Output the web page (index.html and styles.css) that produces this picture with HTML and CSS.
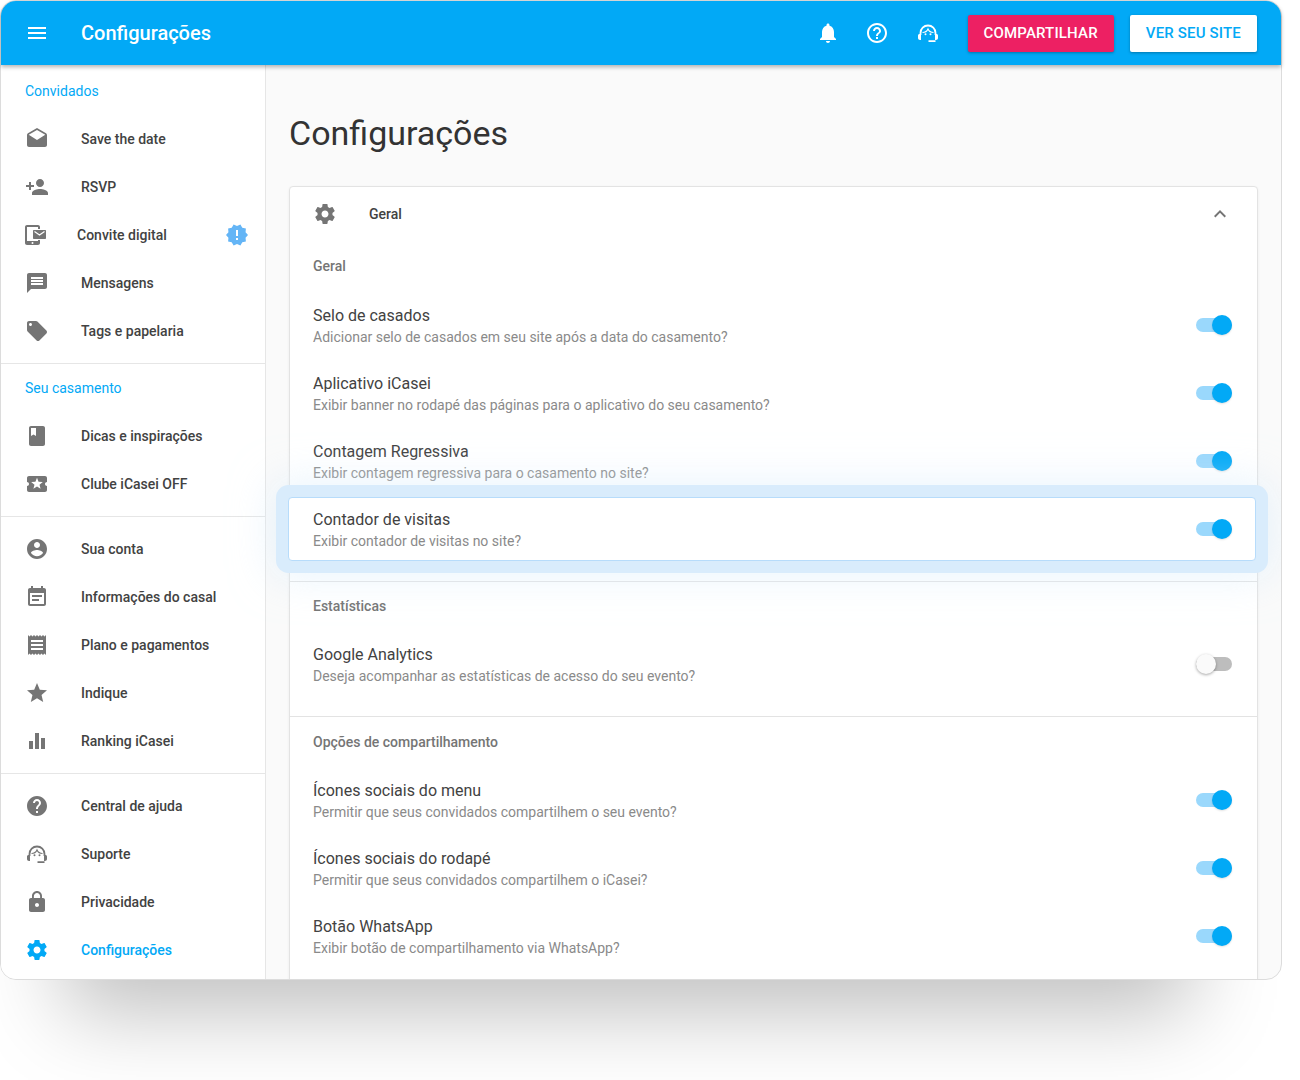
FILE: index.html
```html
<!DOCTYPE html>
<html lang="pt-BR">
<head>
<meta charset="utf-8">
<title>Configurações</title>
<link rel="stylesheet" href="styles.css">
</head>
<body>
<svg class="sprite" aria-hidden="true">
  <symbol id="i-menu" viewBox="0 0 24 24"><path d="M3 18h18v-2H3v2zm0-5h18v-2H3v2zm0-7v2h18V6H3z"/></symbol>
  <symbol id="i-drafts" viewBox="0 0 24 24"><path d="M21.99 8c0-.72-.37-1.35-.94-1.7L12 1 2.95 6.3C2.38 6.65 2 7.28 2 8v10c0 1.1.9 2 2 2h16c1.1 0 2-.9 2-2l-.01-10zM12 13L3.74 7.84 12 3l8.26 4.84L12 13z"/></symbol>
  <symbol id="i-person-add" viewBox="0 0 24 24"><path d="M15 12c2.21 0 4-1.79 4-4s-1.79-4-4-4-4 1.79-4 4 1.79 4 4 4zm-9-2V7H4v3H1v2h3v3h2v-3h3v-2H6zm9 4c-2.67 0-8 1.34-8 4v2h16v-2c0-2.66-5.33-4-8-4z"/></symbol>
  <symbol id="i-device" viewBox="0 0 24 24"><path fill-rule="evenodd" d="M2 2h11c1.100 0 2 .9 2 2v2h-2V4H2v14h11v-1h2v3c0 1.100-.9 2-2 2H2c-1.100 0-2-.9-2-2V4c0-1.100.9-2 2-2zm5.500 17a1 1 0 1 0 0 2 1 1 0 0 0 0-2z"/><path d="M9 7h11c.6 0 1 .4 1 1v7c0 .6-.4 1-1 1H9c-.6 0-1-.4-1-1V8c0-.6.4-1 1-1z"/><path d="M9.500 8.500l5 3.500 5-3.500" fill="none" stroke="#fff" stroke-width="1.200"/></symbol>
  <symbol id="i-release" viewBox="0 0 24 24"><path d="M23 12l-2.44-2.78.34-3.68-3.61-.82-1.89-3.18L12 3 8.6 1.54 6.71 4.72l-3.61.81.34 3.68L1 12l2.44 2.78-.34 3.69 3.61.82 1.89 3.18L12 21l3.4 1.46 1.89-3.18 3.61-.82-.34-3.68L23 12zm-10 5h-2v-2h2v2zm0-4h-2V7h2v6z"/></symbol>
  <symbol id="i-message" viewBox="0 0 24 24"><path d="M20 2H4c-1.1 0-1.99.9-1.99 2L2 22l4-4h14c1.1 0 2-.9 2-2V4c0-1.1-.9-2-2-2zm-2 12H6v-2h12v2zm0-3H6V9h12v2zm0-3H6V6h12v2z"/></symbol>
  <symbol id="i-tag" viewBox="0 0 24 24"><path d="M21.41 11.58l-9-9C12.05 2.22 11.55 2 11 2H4c-1.1 0-2 .9-2 2v7c0 .55.22 1.05.59 1.42l9 9c.36.36.86.58 1.41.58.55 0 1.05-.22 1.41-.59l7-7c.37-.36.59-.86.59-1.41 0-.55-.23-1.06-.59-1.42zM5.500 7C4.670 7 4 6.330 4 5.500S4.670 4 5.500 4 7 4.670 7 5.500 6.330 7 5.500 7z"/></symbol>
  <symbol id="i-book" viewBox="0 0 24 24"><path d="M18 2H6c-1.100 0-2 .9-2 2v16c0 1.100.9 2 2 2h12c1.100 0 2-.9 2-2V4c0-1.100-.9-2-2-2zM6 4h5v8l-2.500-1.500L6 12V4z"/></symbol>
  <symbol id="i-ticket" viewBox="0 0 24 24"><path d="M20 12c0-1.100.9-2 2-2V6c0-1.100-.9-2-2-2H4c-1.100 0-1.990.9-1.990 2v4c1.100 0 1.990.9 1.990 2s-.89 2-2 2v4c0 1.100.9 2 2 2h16c1.100 0 2-.9 2-2v-4c-1.100 0-2-.9-2-2zm-4.420 4.800L12 14.500l-3.580 2.300 1.080-4.120-3.290-2.690 4.240-.25L12 5.800l1.540 3.950 4.240.25-3.290 2.690 1.090 4.110z"/></symbol>
  <symbol id="i-account" viewBox="0 0 24 24"><path d="M12 2C6.480 2 2 6.480 2 12s4.480 10 10 10 10-4.480 10-10S17.520 2 12 2zm0 3c1.660 0 3 1.340 3 3s-1.340 3-3 3-3-1.340-3-3 1.340-3 3-3zm0 14.200c-2.500 0-4.710-1.280-6-3.220.03-1.990 4-3.080 6-3.080 1.990 0 5.970 1.090 6 3.080-1.290 1.940-3.500 3.220-6 3.220z"/></symbol>
  <symbol id="i-event" viewBox="0 0 24 24"><path d="M17 10H7v2h10v-2zm2-7h-1V1h-2v2H8V1H6v2H5c-1.110 0-1.990.9-1.990 2L3 19c0 1.100.89 2 2 2h14c1.100 0 2-.9 2-2V5c0-1.100-.9-2-2-2zm0 16H5V8h14v11zm-5-5H7v2h7v-2z"/></symbol>
  <symbol id="i-receipt" viewBox="0 0 24 24"><path d="M18 17H6v-2h12v2zm0-4H6v-2h12v2zm0-4H6V7h12v2zM3 22l1.500-1.500L6 22l1.500-1.500L9 22l1.500-1.500L12 22l1.500-1.500L15 22l1.500-1.500L18 22l1.500-1.500L21 22V2l-1.500 1.500L18 2l-1.500 1.500L15 2l-1.500 1.500L12 2l-1.500 1.500L9 2 7.500 3.500 6 2 4.500 3.500 3 2v20z"/></symbol>
  <symbol id="i-star" viewBox="0 0 24 24"><path d="M12 17.270L18.180 21l-1.640-7.030L22 9.240l-7.190-.61L12 2 9.190 8.630 2 9.240l5.460 4.730L5.820 21z"/></symbol>
  <symbol id="i-bars" viewBox="0 0 24 24"><path d="M10 20h4V4h-4v16zm-6 0h4v-8H4v8zM16 9v11h4V9h-4z"/></symbol>
  <symbol id="i-help" viewBox="0 0 24 24"><path d="M12 2C6.480 2 2 6.480 2 12s4.480 10 10 10 10-4.480 10-10S17.520 2 12 2zm1 17h-2v-2h2v2zm2.070-7.750l-.9.92C13.450 12.900 13 13.500 13 15h-2v-.5c0-1.100.45-2.100 1.170-2.830l1.240-1.260c.37-.36.59-.86.59-1.410 0-1.100-.9-2-2-2s-2 .9-2 2H8c0-2.210 1.790-4 4-4s4 1.790 4 4c0 .88-.36 1.680-.93 2.250z"/></symbol>
  <symbol id="i-help-outline" viewBox="0 0 24 24"><path d="M11 18h2v-2h-2v2zm1-16C6.480 2 2 6.480 2 12s4.480 10 10 10 10-4.480 10-10S17.520 2 12 2zm0 18c-4.410 0-8-3.590-8-8s3.590-8 8-8 8 3.590 8 8-3.590 8-8 8zm0-14c-2.210 0-4 1.790-4 4h2c0-1.100.9-2 2-2s2 .9 2 2c0 2-3 1.750-3 5h2c0-2.250 3-2.500 3-5 0-2.210-1.790-4-4-4z"/></symbol>
  <symbol id="i-support" viewBox="0 0 24 24"><path d="M4.500 14V12a7.500 7.500 0 0 1 15 0V14" fill="none" stroke="currentColor" stroke-width="1.800"/><path d="M6.500 11.500c2.800 0 4.500-1.300 5.500-3.500 1 2.200 2.700 3.500 5.500 3.500" fill="none" stroke="currentColor" stroke-width="1.200"/><path d="M2 14.500c0-.9.7-1.500 1.500-1.500H5v6H4c-1.100 0-2-.9-2-2zM19 13h1.500c.8 0 1.500.6 1.500 1.500V17c0 1.100-.9 2-2 2h-1zM12.500 19.300H19.500v1.600H12.500z"/><circle cx="9.500" cy="13.300" r="1"/><circle cx="14.500" cy="13.300" r="1"/></symbol>
  <symbol id="i-lock" viewBox="0 0 24 24"><path d="M18 8h-1V6c0-2.760-2.240-5-5-5S7 3.240 7 6v2H6c-1.100 0-2 .9-2 2v10c0 1.100.9 2 2 2h12c1.100 0 2-.9 2-2V10c0-1.100-.9-2-2-2zm-6 9c-1.100 0-2-.9-2-2s.9-2 2-2 2 .9 2 2-.9 2-2 2zm3.100-9H8.900V6c0-1.710 1.390-3.100 3.100-3.100 1.710 0 3.100 1.390 3.100 3.100v2z"/></symbol>
  <symbol id="i-settings" viewBox="0 0 24 24"><path d="M19.430 12.980c.04-.32.07-.64.07-.98s-.03-.66-.07-.98l2.110-1.650c.19-.15.24-.42.12-.64l-2-3.460c-.12-.22-.39-.3-.61-.22l-2.490 1c-.52-.4-1.080-.73-1.690-.98l-.38-2.650C14.460 2.180 14.250 2 14 2h-4c-.25 0-.46.18-.49.42l-.38 2.650c-.61.25-1.170.59-1.690.98l-2.490-1c-.23-.09-.49 0-.61.22l-2 3.460c-.13.22-.07.49.12.64l2.110 1.650c-.04.32-.07.65-.07.98s.03.66.07.98l-2.110 1.650c-.19.15-.24.42-.12.64l2 3.460c.12.22.39.3.61.22l2.490-1c.52.4 1.080.73 1.690.98l.38 2.650c.03.24.24.42.49.42h4c.25 0 .46-.18.49-.42l.38-2.650c.61-.25 1.170-.59 1.690-.98l2.490 1c.23.09.49 0 .61-.22l2-3.460c.12-.22.07-.49-.12-.64l-2.110-1.650zM12 15.500c-1.930 0-3.500-1.570-3.500-3.500s1.570-3.500 3.500-3.500 3.500 1.570 3.500 3.500-1.570 3.500-3.500 3.500z"/></symbol>
  <symbol id="i-bell" viewBox="0 0 24 24"><path d="M12 22c1.100 0 2-.9 2-2h-4c0 1.100.89 2 2 2zm6-6v-5c0-3.070-1.640-5.640-4.500-6.320V4c0-.83-.67-1.500-1.500-1.500s-1.500.67-1.500 1.500v.68C7.630 5.360 6 7.920 6 11v5l-2 2v1h16v-1l-2-2z"/></symbol>
  <symbol id="i-less" viewBox="0 0 24 24"><path d="M12 8l-6 6 1.410 1.410L12 10.830l4.590 4.580L18 14z"/></symbol>
</svg>

<div class="window">
  <header class="topbar">
    <svg class="icon menu-btn"><use href="#i-menu"/></svg>
    <div class="topbar-title">Configurações</div>
    <svg class="icon top-bell"><use href="#i-bell"/></svg>
    <svg class="icon top-help"><use href="#i-help-outline"/></svg>
    <svg class="icon top-support"><use href="#i-support"/></svg>
    <a class="btn btn-pink">COMPARTILHAR</a>
    <a class="btn btn-white">VER SEU SITE</a>
  </header>

  <div class="body">
    <nav class="sidebar">
      <section class="nav-group first">
        <div class="nav-label">Convidados</div>
        <a class="nav-item"><svg class="icon"><use href="#i-drafts"/></svg><span>Save the date</span></a>
        <a class="nav-item"><svg class="icon"><use href="#i-person-add"/></svg><span>RSVP</span></a>
        <a class="nav-item nav-item-inset"><svg class="icon"><use href="#i-device"/></svg><span>Convite digital</span><svg class="icon nav-badge"><use href="#i-release"/></svg></a>
        <a class="nav-item"><svg class="icon"><use href="#i-message"/></svg><span>Mensagens</span></a>
        <a class="nav-item"><svg class="icon"><use href="#i-tag"/></svg><span>Tags e papelaria</span></a>
      </section>
      <section class="nav-group labelled">
        <div class="nav-label">Seu casamento</div>
        <a class="nav-item"><svg class="icon"><use href="#i-book"/></svg><span>Dicas e inspirações</span></a>
        <a class="nav-item"><svg class="icon"><use href="#i-ticket"/></svg><span>Clube iCasei OFF</span></a>
      </section>
      <section class="nav-group">
        <a class="nav-item"><svg class="icon"><use href="#i-account"/></svg><span>Sua conta</span></a>
        <a class="nav-item"><svg class="icon"><use href="#i-event"/></svg><span>Informações do casal</span></a>
        <a class="nav-item"><svg class="icon"><use href="#i-receipt"/></svg><span>Plano e pagamentos</span></a>
        <a class="nav-item"><svg class="icon"><use href="#i-star"/></svg><span>Indique</span></a>
        <a class="nav-item"><svg class="icon"><use href="#i-bars"/></svg><span>Ranking iCasei</span></a>
      </section>
      <section class="nav-group">
        <a class="nav-item"><svg class="icon"><use href="#i-help"/></svg><span>Central de ajuda</span></a>
        <a class="nav-item"><svg class="icon"><use href="#i-support"/></svg><span>Suporte</span></a>
        <a class="nav-item"><svg class="icon"><use href="#i-lock"/></svg><span>Privacidade</span></a>
        <a class="nav-item active"><svg class="icon"><use href="#i-settings"/></svg><span>Configurações</span></a>
      </section>
    </nav>

    <main class="content">
      <h1 class="page-title">Configurações</h1>
      <div class="card">
        <div class="card-head">
          <svg class="icon"><use href="#i-settings"/></svg>
          <span class="card-head-title">Geral</span>
          <svg class="icon card-head-toggle"><use href="#i-less"/></svg>
        </div>

        <section class="group group-first">
          <div class="group-label">Geral</div>
          <div class="row"><div class="row-text"><div class="row-title">Selo de casados</div><div class="row-sub">Adicionar selo de casados em seu site após a data do casamento?</div></div><div class="switch on"></div></div>
          <div class="row"><div class="row-text"><div class="row-title">Aplicativo iCasei</div><div class="row-sub">Exibir banner no rodapé das páginas para o aplicativo do seu casamento?</div></div><div class="switch on"></div></div>
          <div class="row"><div class="row-text"><div class="row-title">Contagem Regressiva</div><div class="row-sub">Exibir contagem regressiva para o casamento no site?</div></div><div class="switch on"></div></div>
          <div class="row row-focus"><div class="row-text"><div class="row-title">Contador de visitas</div><div class="row-sub">Exibir contador de visitas no site?</div></div><div class="switch on"></div></div>
        </section>

        <section class="group">
          <div class="group-label">Estatísticas</div>
          <div class="row"><div class="row-text"><div class="row-title">Google Analytics</div><div class="row-sub">Deseja acompanhar as estatísticas de acesso do seu evento?</div></div><div class="switch"></div></div>
        </section>

        <section class="group group-share">
          <div class="group-label">Opções de compartilhamento</div>
          <div class="row"><div class="row-text"><div class="row-title">Ícones sociais do menu</div><div class="row-sub">Permitir que seus convidados compartilhem o seu evento?</div></div><div class="switch on"></div></div>
          <div class="row"><div class="row-text"><div class="row-title">Ícones sociais do rodapé</div><div class="row-sub">Permitir que seus convidados compartilhem o iCasei?</div></div><div class="switch on"></div></div>
          <div class="row"><div class="row-text"><div class="row-title">Botão WhatsApp</div><div class="row-sub">Exibir botão de compartilhamento via WhatsApp?</div></div><div class="switch on"></div></div>
        </section>
      </div>
    </main>
  </div>
</div>
</body>
</html>
```

FILE: styles.css
```css
* { box-sizing: border-box; }

html, body {
  margin: 0;
  height: 1080px;
  overflow: hidden;
  background: #fff;
}

body {
  font-family: Roboto, "Liberation Sans", sans-serif;
  color: #424242;
}

.sprite { display: none; }

.icon {
  width: 24px;
  height: 24px;
  flex: none;
  fill: currentColor;
  color: #757575;
}

.window {
  width: 1282px;
  height: 980px;
  border: 1px solid #dcdcdc;
  border-radius: 16px;
  display: flex;
  flex-direction: column;
  background: #fafafa;
  box-shadow: -14px 110px 80px -78px rgba(0, 0, 0, .25);
  position: relative;
}

.topbar {
  height: 64px;
  flex: none;
  display: flex;
  align-items: center;
  background: #02a9f6;
  border-radius: 15px 15px 0 0;
  box-shadow: 0 2px 4px rgba(0, 0, 0, .3);
  color: #fff;
  padding: 0 24px;
  position: relative;
  z-index: 3;
}

.topbar .icon { color: #fff; }

.topbar-title {
  margin-left: 32px;
  font-size: 20px;
  font-weight: 500;
  margin-right: auto;
}

.top-help { margin-left: 25px; }
.top-support { margin-left: 27px; }

.btn {
  height: 37px;
  display: flex;
  align-items: center;
  padding: 0 16px;
  border-radius: 2px;
  font-size: 15px;
  font-weight: 500;
  letter-spacing: .17px;
  box-shadow: 0 1px 3px rgba(0, 0, 0, .3);
}

.btn-pink { background: #ed2063; color: #fff; margin-left: 28px; }
.btn-white { background: #fff; color: #02a9f6; margin-left: 16px; }

.body {
  flex: 1;
  min-height: 0;
  display: flex;
  overflow: hidden;
  border-radius: 0 0 15px 15px;
}

.sidebar {
  width: 265px;
  flex: none;
  background: #fff;
  border-right: 1px solid #e6e6e6;
}

.nav-group {
  padding: 8px 0;
  border-bottom: 1px solid #e6e6e6;
}

.nav-group:last-child { border-bottom: 0; }
.nav-group.first { padding-top: 2px; }
.nav-group.labelled { padding-top: 0; }

.nav-label {
  height: 48px;
  display: flex;
  align-items: center;
  padding-left: 24px;
  font-size: 14px;
  font-weight: 400;
  color: #02a9f6;
}

.nav-item {
  height: 48px;
  display: flex;
  align-items: center;
  padding-left: 24px;
  font-size: 14px;
  font-weight: 500;
  color: #424242;
}

.nav-item > span { margin-left: 32px; }
.nav-item-inset > span { margin-left: 28px; }

.nav-badge {
  color: #64b5f6;
  margin-left: auto;
  margin-right: 16px;
}

.nav-item.active,
.nav-item.active .icon { color: #02a9f6; }

.content {
  flex: 1;
  min-width: 0;
  padding: 0 23px 0 23px;
}

.page-title {
  margin: 0;
  height: 121px;
  display: flex;
  align-items: center;
  padding-top: 15px;
  font-size: 34px;
  font-weight: 400;
  color: #333;
}

.card {
  background: #fff;
  border: 1px solid #e3e3e3;
  border-radius: 4px;
  box-shadow: 0 1px 3px rgba(0, 0, 0, .06);
}

.card-head {
  height: 56px;
  display: flex;
  align-items: center;
  padding: 0 25px 2px 23px;
}

.card-head-title {
  margin-left: 32px;
  font-size: 14px;
  font-weight: 500;
}

.card-head-toggle { margin-left: auto; }

.group {
  padding-bottom: 18px;
  border-bottom: 1px solid #e3e3e3;
}

.group:last-child { border-bottom: 0; }
.group-share { padding-top: 1px; }

.group-label {
  height: 48px;
  display: flex;
  align-items: center;
  padding-left: 23px;
  font-size: 14px;
  font-weight: 500;
  color: #757575;
}

.group-first .group-label { padding-bottom: 2px; }

.row {
  height: 68px;
  display: flex;
  align-items: center;
  padding: 0 25px 0 23px;
}

.row-focus {
  position: relative;
  height: 64px;
  margin: 2px 1px 2px -2px;
  padding: 0 23px 0 24px;
  background: #fff;
  border: 1px solid #b7dcfb;
  border-radius: 4px;
  box-shadow: 0 0 0 12px #d9ecfc, 0 0 40px 16px rgba(217, 236, 252, .55);
}

.row-text { flex: 1; min-width: 0; padding-top: 2px; }

.row-title {
  font-size: 16px;
  line-height: 22px;
  color: #424242;
}

.row-sub {
  font-size: 14px;
  line-height: 20px;
  color: #8a8a8a;
}

.switch {
  width: 36px;
  height: 14px;
  flex: none;
  border-radius: 7px;
  background: #bdbdbd;
  position: relative;
}

.switch::after {
  content: "";
  position: absolute;
  top: -3px;
  left: 0;
  width: 20px;
  height: 20px;
  border-radius: 50%;
  background: #fafafa;
  box-shadow: 0 1px 3px rgba(0, 0, 0, .35);
}

.switch.on { background: #9ad8fc; }

.switch.on::after {
  left: 16px;
  background: #02a9f6;
  box-shadow: 0 1px 2px rgba(0, 0, 0, .12);
}
```
